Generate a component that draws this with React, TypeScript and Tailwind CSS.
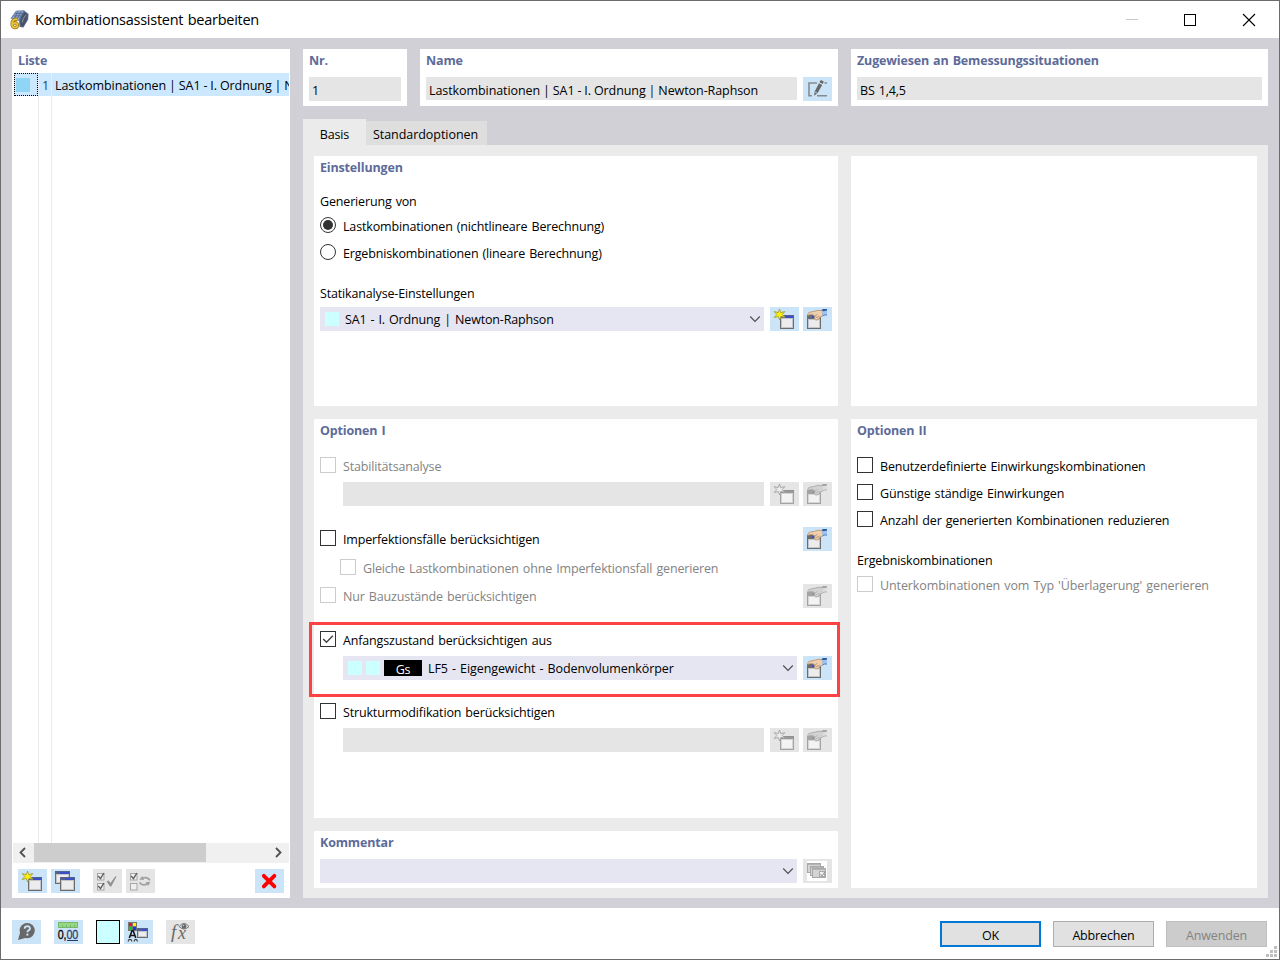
import React, { useState } from 'react';
import clsx from 'clsx';

const Star = ({ gray }: { gray?: boolean }) => (
  <path
    d="M9.5 2 L10.7 5.6 L14.8 4.6 L12.2 7.5 L14.8 10.3 L10.8 9.5 L9.6 13 L8.3 9.5 L4.2 10.5 L6.8 7.5 L4.2 4.6 L8.3 5.6 Z"
    fill={gray ? '#ececec' : '#fff200'}
    stroke={gray ? '#a2a2a2' : '#a39c3c'}
    strokeWidth="0.9"
  />
);

const MiniWindow = ({ x, y, w = 14, h = 14, gray }: { x: number; y: number; w?: number; h?: number; gray?: boolean }) => (
  <g shapeRendering="crispEdges">
    <rect x={x} y={y} width={w} height={h} fill={gray ? '#a3a3a3' : '#6c6c6c'} />
    <rect x={x} y={y} width={w} height={3} fill={gray ? '#929292' : '#55608c'} />
    <rect x={x + 5} y={y + 1} width={w - 6} height={2} fill={gray ? '#999999' : '#3b4fc6'} />
    <rect x={x + 1} y={y + 3} width={w - 2} height={h - 4} fill={gray ? '#d5d5d5' : '#c2c5c9'} />
    <rect x={x + 2} y={y + 4} width={w - 4} height={h - 6} fill={gray ? '#f3f3f3' : '#ececec'} />
  </g>
);

const NewIcon = ({ gray }: { gray?: boolean }) => (
  <svg width="29" height="24">
    <MiniWindow x={10} y={8} gray={gray} />
    <Star gray={gray} />
  </svg>
);

const EditIcon = ({ gray }: { gray?: boolean }) => (
  <svg width="29" height="24">
    <g shapeRendering="crispEdges">
      <rect x="4" y="8" width="14" height="14" fill={gray ? '#a3a3a3' : '#6c6c6c'} />
      <rect x="9" y="9" width="5" height="2" fill={gray ? '#999999' : '#3b4fc6'} />
      <rect x="5" y="12" width="12" height="9" fill={gray ? '#d5d5d5' : '#c2c5c9'} />
      <rect x="6" y="13" width="10" height="7" fill={gray ? '#f3f3f3' : '#ececec'} />
    </g>
    <path
      d="M4.8 8.6 L5 6.4 Q5.8 5.2 8 5 L12.5 4 Q15 2.8 18 3.5 L20 4.2 L19.7 8.8 L17.5 10.2 L15.5 12.6 L12.8 13 L11.2 11.6 L11.8 9.3 L9.8 7.4 L7 7.6 Z"
      fill={gray ? '#d2d2d2' : '#f0cfae'}
      stroke={gray ? '#a2a2a2' : '#b18e6e'}
      strokeWidth="0.8"
    />
    <path d="M11.8 9 L14.5 7.4 M12.3 11 L16.5 9.2 M15.8 11.5 L17.5 9.6" stroke={gray ? '#aaa' : '#a97f5f'} strokeWidth="0.7" />
    <path d="M19.2 3.6 L24 2 V8.3 L21.8 8.3 L19.6 9.2 Z" fill={gray ? '#dedede' : '#9ec3f0'} />
    <path d="M18.4 3.2 L19.8 2 H24 V3.4 L20.5 4.2 Z" fill={gray ? '#a4a4a4' : '#2d589f'} />
    <path d="M19.6 9 L21.8 7.9 L24 8.1" stroke={gray ? '#b6b6b6' : '#4f83cd'} fill="none" />
  </svg>
);

const CopyIcon = () => (
  <svg width="29" height="24">
    <MiniWindow x={4} y={2} w={15} h={13} />
    <MiniWindow x={9} y={8} w={15} />
  </svg>
);

const SmallCheck = ({ x, y, checked }: { x: number; y: number; checked?: boolean }) => (
  <g>
    <rect x={x + 0.5} y={y + 0.5} width="6.5" height="6.5" fill="#efefef" stroke="#a6a6a6" />
    {checked && <path d={`M${x + 1.2} ${y + 3} l2.3 2.6 l3.4 -5.6`} stroke="#5c5c5c" strokeWidth="1.4" fill="none" />}
  </g>
);

const CheckAllIcon = () => (
  <svg width="29" height="24">
    <SmallCheck x={4} y={4} checked />
    <SmallCheck x={4} y={14} checked />
    <path d="M13.5 12.6 L15.8 11.6 L17.5 14 L22.4 7.2 L23.6 7.6 L18.2 17.4 L17 17.4 Z" fill="#929292" />
  </svg>
);

const InvertIcon = () => (
  <svg width="29" height="24">
    <SmallCheck x={4} y={4} checked />
    <SmallCheck x={4} y={14} />
    <path d="M23.8 11.3 Q21.5 7.6 17 9" stroke="#a0a0a0" strokeWidth="1.8" fill="none" />
    <path d="M13.2 10.6 L16.6 6.9 L18 11 Z M24.4 12.8 L19.5 13.2 L22.2 17 Z" fill="#a0a0a0" />
    <path d="M13.6 13.6 Q16 17.2 21 15.2" stroke="#a0a0a0" strokeWidth="1.8" fill="none" />
  </svg>
);

const DeleteIcon = () => (
  <svg width="29" height="24">
    <path d="M8.8 6.8 L19.4 17.4 M19.4 6.8 L8.8 17.4" stroke="#ff0000" strokeWidth="3.8" strokeLinecap="round" />
  </svg>
);

const RenameIcon = () => (
  <svg width="29" height="24">
    <path d="M14 6 H6 V18.8 H9 M14 18.8 H24 M21.5 6 H24" fill="none" stroke="#858b90" strokeWidth="1.6" />
    <path d="M11 18.8 L11.8 14.2 L16 6.3 L19.2 8 L14.6 16 Z" fill="#666666" />
    <path d="M16.5 5.3 L17.9 2.9 L20.8 4.4 L19.7 7 Z" fill="#666666" />
    <path d="M12 14.9 L14 16" stroke="#cce4f7" strokeWidth="0.8" />
  </svg>
);

const LibraryIcon = () => (
  <svg width="29" height="24" shapeRendering="crispEdges">
    <rect x="4" y="2" width="20" height="20" fill="#fff" />
    {[0, 1, 2].map((i) => (
      <g key={i}>
        <rect x={4.5 + i * 2.5} y={4.5 + i * 2.5} width="13" height="9" fill="#d4d4d4" stroke="#a8a8a8" />
        <rect x={5 + i * 2.5} y={5 + i * 2.5} width="12" height="1" fill="#b4b4b4" />
      </g>
    ))}
    <rect x="16.5" y="12.5" width="5" height="5" fill="#eee" stroke="#aaa" />
    <path d="M17.5 15 L19 17 L22 12.5" fill="none" stroke="#999" shapeRendering="auto" />
  </svg>
);

const HelpIcon = () => (
  <svg width="29" height="24">
    <circle cx="15.2" cy="10.6" r="7.6" fill="#686868" />
    <path d="M8.3 12 L6 20 L14 17.8 Z" fill="#686868" />
    <path d="M12.6 8.7 Q12.8 6.2 15.4 6.2 Q18.1 6.3 18 8.5 Q17.8 9.9 16.2 10.6 Q15.4 11 15.4 12.3" fill="none" stroke="#cce4f7" strokeWidth="1.8" />
    <rect x="14.4" y="13.6" width="2" height="2" fill="#cce4f7" />
  </svg>
);

const UnitsIcon = () => (
  <svg width="29" height="24">
    <rect x="4" y="2" width="20" height="6" fill="#94d883" />
    <path d="M4.5 2.5 H23.5 V7.5 H4.5 Z M8.5 5 V8 M12.5 5 V8 M16.5 5 V8 M20.5 5 V8" fill="none" stroke="#78b66b" />
    <text x="3.7" y="18.6" fontSize="13.5" fontFamily="Liberation Sans, sans-serif" textLength="20.5" lengthAdjust="spacingAndGlyphs" fill="#000" stroke="#000" strokeWidth="0.3">0,<tspan fill="#2c4070" stroke="#2c4070">00</tspan></text>
    <path d="M13 20.5 H24" stroke="#203d70" />
  </svg>
);

const DisplayIcon = () => (
  <svg width="29" height="24">
    <g shapeRendering="crispEdges">
      <rect x="4" y="2" width="9" height="9" fill="#777" />
      <rect x="5" y="3" width="3" height="3" fill="#e21a1a" />
      <rect x="9" y="3" width="3" height="3" fill="#fff200" />
      <rect x="5" y="7" width="3" height="3" fill="#00cf18" />
      <rect x="9" y="7" width="3" height="3" fill="#1436eb" />
    </g>
    <MiniWindow x={13} y={8} w={11} h={10} />
    <path d="M5.3 18 L8 10.8 H9.2 L11.8 18 M6.5 15.5 H10.8" fill="none" stroke="#161616" strokeWidth="1.6" />
    <path d="M4 21.5 L5 19.5 H7 L8 21.5 M10 21.5 L11 19.5 H12.5 L13.5 21.5" fill="none" stroke="#404040" strokeWidth="1.2" />
  </svg>
);

const FxIcon = () => (
  <svg width="29" height="24">
    <text x="5" y="18" fontFamily="Liberation Serif, serif" fontSize="19" fontStyle="italic" fill="#696969">f</text>
    <text x="12" y="19" fontFamily="Liberation Serif, serif" fontSize="18" fontStyle="italic" fill="#696969">x</text>
    <path d="M13 6.5 Q18 0.5 23 6.5 Q18 11.5 13 6.5 Z" fill="#e0e0e0" stroke="#777" />
    <circle cx="18" cy="6.4" r="2.4" fill="#686868" />
    <circle cx="17.5" cy="5.6" r="0.7" fill="#ddd" />
  </svg>
);

const AppIcon = () => (
  <svg width="20" height="20" viewBox="0 0 20 20">
    <path d="M1.5 8.5 L7 0.8 L15 0.3 L19.6 4 L19.2 9.5 L14.5 17.5 L10.5 17 L10 11 Z" fill="#5f76a0" />
    <path d="M2.5 8.5 L7.3 1.2 L14.5 1 L10.5 7.5 L9.5 11 Z" fill="#8ea5c9" />
    <path d="M4.5 6 L11.5 5.7 M6 3.6 L13.5 3.3 M9 1.2 L5.5 8.5 M12 1.4 L8.2 9" stroke="#4c658f" strokeWidth="0.8" />
    <path d="M11.2 11 Q11.7 6 15.5 2 L18.8 4.8 L18.4 9.6 L14.3 16.6 L11.5 16.4 Z" fill="#4a5365" />
    <path d="M13.3 12.5 Q13.3 8.5 17 5" stroke="#8b99b0" fill="none" />
    <path d="M8.6 9.6 Q3.2 8.4 3 14 Q3.1 17.6 5.8 17.6 Q8.6 17.4 8.5 15 Q8.1 12.6 5.8 12.8 Q3.8 13 3.2 14.6" fill="none" stroke="#94710d" strokeWidth="3.2" />
    <path d="M8.6 9.6 Q3.2 8.4 3 14 Q3.1 17.6 5.8 17.6 Q8.6 17.4 8.5 15 Q8.1 12.6 5.8 12.8 Q3.8 13 3.2 14.6" fill="none" stroke="#ecc53a" strokeWidth="1.8" />
  </svg>
);

const IconButton = ({ children, disabled, className }: { children: React.ReactNode; disabled?: boolean; className?: string }) => (
  <button
    type="button"
    disabled={disabled}
    className={clsx('block h-6 w-[29px] shrink-0', disabled ? 'bg-[#e5e5e5]' : 'bg-[#cce4f7]', className)}
  >
    {children}
  </button>
);

const Heading = ({ children }: { children: React.ReactNode }) => (
  <h2 className="h-6 shrink-0 text-[12.5px] leading-[23px] font-bold tracking-[-0.16px] whitespace-nowrap text-[#5d6b99]">{children}</h2>
);

const Chevron = () => (
  <svg width="12" height="8" className="mr-[3.5px] shrink-0">
    <path d="M1.2 1.5 L6 6.3 L10.8 1.5" fill="none" stroke="#505050" strokeWidth="1.2" />
  </svg>
);

const Combo = ({ children, disabled }: { children?: React.ReactNode; disabled?: boolean }) => (
  <div className={clsx('flex h-6 min-w-0 grow items-center', disabled ? 'bg-[#e5e5e5]' : 'bg-[#e6e6f2]')}>
    <div className="flex grow items-center whitespace-pre">{children}</div>
    {!disabled && <Chevron />}
  </div>
);

type CheckProps = { label: string; checked?: boolean; disabled?: boolean; onChange?: () => void };

const Check = ({ label, checked, disabled, onChange }: CheckProps) => (
  <div className={clsx('flex h-4 grow items-center whitespace-nowrap', disabled && 'text-[#838383]')} onClick={disabled ? undefined : onChange}>
    <span className={clsx('mr-[7px] block size-4 shrink-0 border', disabled ? 'border-[#cccccc]' : 'border-[#333333]')}>
      {checked && (
        <svg width="14" height="14">
          <path d="M2.2 7 L5.5 10.3 L11.8 3.8" fill="none" stroke="#444" strokeWidth="1.5" />
        </svg>
      )}
    </span>
    <span className="pt-1">{label}</span>
  </div>
);

const Radio = ({ label, checked, onChange }: CheckProps) => (
  <div className="flex h-4 items-center whitespace-nowrap" onClick={onChange}>
    <span className="mr-[7px] flex size-4 shrink-0 items-center justify-center rounded-full border border-[#333333]">
      {checked && <span className="size-[10px] rounded-full bg-[#333333]" />}
    </span>
    <span className="pt-1">{label}</span>
  </div>
);

const Swatch = () => <span className="block size-[14px] shrink-0 bg-[#ccffff]" />;

const App = () => {
  const [mode, setMode] = useState('lk');
  const [imperfection, setImperfection] = useState(false);
  const [initialState, setInitialState] = useState(true);
  const [modification, setModification] = useState(false);
  const [options, setOptions] = useState([false, false, false]);

  const toggleOption = (index: number) => {
    setOptions(options.map((value, i) => (i === index ? !value : value)));
  };

  return (
    <div className="flex h-[960px] w-[1280px] flex-col overflow-hidden border border-[#6b6b6e] bg-white font-['Open_Sans','Noto_Sans',sans-serif] text-[12.5px] leading-4 tracking-[-0.16px] text-black [word-spacing:1px] select-none">
      <header className="flex h-[37px] shrink-0 items-center pl-2">
        <AppIcon />
        <h1 className="grow pt-px pl-[6px] text-[14.5px] tracking-[-0.26px]">Kombinationsassistent bearbeiten</h1>
        <svg width="155" height="36" shapeRendering="crispEdges">
          <path d="M2 17.5 H14" stroke="#c8c8c8" />
          <rect x="60.5" y="12.5" width="11" height="11" fill="none" stroke="#000" />
          <path d="M119 12 L131 24 M131 12 L119 24" stroke="#000" shapeRendering="auto" strokeWidth="1.1" />
        </svg>
      </header>

      <main className="flex h-[870px] shrink-0 gap-[13px] bg-[#d1d0d6] pt-[11px] pr-[11px] pb-[10px] pl-[11px]">
        <aside className="flex w-[278px] shrink-0 flex-col bg-white">
          <div className="pl-[6px]">
            <Heading>Liste</Heading>
          </div>
          <div className="flex grow flex-col pl-[2px]">
            <div className="flex h-[23px] w-[275px] items-center overflow-hidden bg-[#cce8ff] whitespace-nowrap">
              <span className="flex h-[23px] w-6 shrink-0 items-center border border-dotted border-black pl-px">
                <span className="size-[14px] bg-[#8fd5f5]" />
              </span>
              <span className="flex h-[23px] w-[14px] shrink-0 items-center border-x border-[#e3eef6] pt-[2px] pl-[3px] text-[#204060]">1</span>
              <span className="pt-[2px] pl-[3px] tracking-[-0.08px] [word-spacing:-0.2px]">Lastkombinationen | SA1 - I. Ordnung | Newton-Raphson</span>
            </div>
            <div className="ml-6 w-[14px] grow border-x border-[#ebebeb]" />
          </div>
          <div className="mx-px flex h-5 shrink-0 items-start bg-[#f0f0f0]">
            <svg width="21" height="20">
              <path d="M12 5 L7.5 9.5 L12 14" fill="none" stroke="#505050" strokeWidth="1.8" />
            </svg>
            <div className="h-[19px] w-[172px] bg-[#cdcdcd]" />
            <svg width="21" height="20" className="ml-auto">
              <path d="M8 5 L12.5 9.5 L8 14" fill="none" stroke="#505050" strokeWidth="1.8" />
            </svg>
          </div>
          <div className="flex h-[35px] shrink-0 gap-1 pt-[6px] pr-[6px] pl-[6px]">
            <IconButton><NewIcon /></IconButton>
            <IconButton><CopyIcon /></IconButton>
            <IconButton disabled className="ml-[9px]"><CheckAllIcon /></IconButton>
            <IconButton disabled><InvertIcon /></IconButton>
            <IconButton className="ml-auto"><DeleteIcon /></IconButton>
          </div>
        </aside>

        <div className="flex grow flex-col">
          <div className="flex h-[57px] shrink-0 gap-[13px]">
            <section className="w-[104px] bg-white px-[6px]">
              <Heading>Nr.</Heading>
              <div className="mt-1 h-6 bg-[#e5e5e5] pt-[6px] pl-[3px]">1</div>
            </section>
            <section className="w-[418px] bg-white px-[6px]">
              <Heading>Name</Heading>
              <div className="mt-1 flex gap-[6px]">
                <div className="h-[23px] grow bg-[#e5e5e5] pt-[6px] pl-[3px] tracking-[-0.08px] [word-spacing:-0.2px]">Lastkombinationen | SA1 - I. Ordnung | Newton-Raphson</div>
                <IconButton><RenameIcon /></IconButton>
              </div>
            </section>
            <section className="w-[417px] bg-white px-[6px]">
              <Heading>Zugewiesen an Bemessungssituationen</Heading>
              <div className="mt-1 h-[23px] bg-[#e5e5e5] pt-[6px] pl-[3px]">BS 1,4,5</div>
            </section>
          </div>

          <nav className="mt-[13px] flex h-[26px] shrink-0 items-end">
            <div className="h-[26px] w-[63px] bg-[#ebebeb] pt-2 text-center">Basis</div>
            <div className="h-6 w-[121px] bg-[#dedede] pt-[6px] pl-[7px] tracking-[-0.05px]">Standardoptionen</div>
          </nav>

          <div className="flex grow gap-[13px] bg-[#ebebeb] px-[11px] pt-[11px] pb-[10px]">
            <div className="flex w-[524px] flex-col gap-[13px]">
              <section className="flex h-[250px] flex-col bg-white px-[6px]">
                <Heading>Einstellungen</Heading>
                <p className="mt-[14px]">Generierung von</p>
                <div className="mt-[7px] flex flex-col gap-[11px]">
                  <Radio label="Lastkombinationen (nichtlineare Berechnung)" checked={mode === 'lk'} onChange={() => setMode('lk')} />
                  <Radio label="Ergebniskombinationen (lineare Berechnung)" checked={mode === 'ek'} onChange={() => setMode('ek')} />
                </div>
                <p className="mt-[26px]">Statikanalyse-Einstellungen</p>
                <div className="mt-[5px] flex">
                  <Combo>
                    <span className="mx-[5px]"><Swatch /></span>
                    <span className="pt-[2px] pl-px">SA1 - I. Ordnung | Newton-Raphson</span>
                  </Combo>
                  <IconButton className="ml-[6px]"><NewIcon /></IconButton>
                  <IconButton className="ml-1"><EditIcon /></IconButton>
                </div>
              </section>

              <section className="relative flex h-[399px] flex-col bg-white px-[6px]">
                <Heading>Optionen I</Heading>
                <div className="mt-[14px] flex"><Check label="Stabilitätsanalyse" disabled /></div>
                <div className="mt-[9px] flex pl-[23px]">
                  <Combo disabled />
                  <IconButton disabled className="ml-[6px]"><NewIcon gray /></IconButton>
                  <IconButton disabled className="ml-1"><EditIcon gray /></IconButton>
                </div>
                <div className="mt-[21px] flex">
                  <div className="flex grow pt-[3px]">
                    <Check label="Imperfektionsfälle berücksichtigen" checked={imperfection} onChange={() => setImperfection(!imperfection)} />
                  </div>
                  <IconButton><EditIcon /></IconButton>
                </div>
                <div className="mt-2 flex pl-5"><Check label="Gleiche Lastkombinationen ohne Imperfektionsfall generieren" disabled /></div>
                <div className="mt-[9px] flex">
                  <div className="flex grow pt-[3px]">
                    <Check label="Nur Bauzustände berücksichtigen" disabled />
                  </div>
                  <IconButton disabled><EditIcon gray /></IconButton>
                </div>
                <div className="mt-[23px] flex">
                  <Check label="Anfangszustand berücksichtigen aus" checked={initialState} onChange={() => setInitialState(!initialState)} />
                </div>
                <div className="mt-[9px] flex gap-[6px] pl-[23px]">
                  <Combo>
                    <div className="flex items-center gap-1 pr-[6px] pl-[5px]">
                      <Swatch />
                      <Swatch />
                      <span className="h-4 w-[38px] bg-black pt-[2px] text-center text-white">Gs</span>
                    </div>
                    <span className="pt-[2px] tracking-[-0.09px]">LF5 - Eigengewicht - Bodenvolumenkörper</span>
                  </Combo>
                  <IconButton><EditIcon /></IconButton>
                </div>
                <div className="mt-[23px] flex">
                  <Check label="Strukturmodifikation berücksichtigen" checked={modification} onChange={() => setModification(!modification)} />
                </div>
                <div className="mt-[9px] flex pl-[23px]">
                  <Combo disabled />
                  <IconButton disabled className="ml-[6px]"><NewIcon gray /></IconButton>
                  <IconButton disabled className="ml-1"><EditIcon gray /></IconButton>
                </div>
                {/* highlight around the initial state row */}
                <div className="pointer-events-none absolute top-[203px] -left-[5px] h-[75px] w-[531px] border-3 border-[#fc4242]" />
              </section>

              <section className="flex h-[57px] flex-col bg-white px-[6px]">
                <Heading>Kommentar</Heading>
                <div className="mt-1 flex gap-[6px]">
                  <Combo />
                  <IconButton disabled><LibraryIcon /></IconButton>
                </div>
              </section>
            </div>

            <div className="flex w-[406px] flex-col gap-[13px]">
              <section className="h-[250px] bg-white" />
              <section className="flex h-[469px] flex-col bg-white px-[6px]">
                <Heading>Optionen II</Heading>
                <div className="mt-[14px] flex flex-col gap-[11px]">
                  <Check label="Benutzerdefinierte Einwirkungskombinationen" checked={options[0]} onChange={() => toggleOption(0)} />
                  <Check label="Günstige ständige Einwirkungen" checked={options[1]} onChange={() => toggleOption(1)} />
                  <Check label="Anzahl der generierten Kombinationen reduzieren" checked={options[2]} onChange={() => toggleOption(2)} />
                </div>
                <p className="mt-[26px]">Ergebniskombinationen</p>
                <div className="mt-[7px] flex tracking-[-0.1px]"><Check label="Unterkombinationen vom Typ 'Überlagerung' generieren" disabled /></div>
              </section>
            </div>
          </div>
        </div>
      </main>

      <footer className="relative flex grow items-start pt-3 pl-[11px]">
        <IconButton><HelpIcon /></IconButton>
        <IconButton className="ml-[13px]"><UnitsIcon /></IconButton>
        <div className="ml-[13px] size-6 border border-black bg-[#ccffff]" />
        <IconButton className="ml-1"><DisplayIcon /></IconButton>
        <IconButton disabled className="ml-[13px]"><FxIcon /></IconButton>
        <div className="mt-px mr-3 ml-auto flex gap-3">
          <button type="button" className="h-[26px] w-[101px] border-2 border-[#0078d7] bg-[#e1e1e1] pt-1">OK</button>
          <button type="button" className="h-[26px] w-[101px] border border-[#adadad] bg-[#e1e1e1] pt-1">Abbrechen</button>
          <button type="button" disabled className="h-[26px] w-[101px] border border-[#bfbfbf] bg-[#cccccc] pt-1 text-[#838383]">Anwenden</button>
        </div>
        <svg width="11" height="11" className="absolute right-[2px] bottom-[2px]" shapeRendering="crispEdges">
          <path d="M8 0h3v3h-3z M8 4h3v3h-3z M8 8h3v3h-3z M4 4h3v3h-3z M4 8h3v3h-3z M0 8h3v3h-3z" fill="#bfbfbf" />
        </svg>
      </footer>
    </div>
  );
};

export default App;
